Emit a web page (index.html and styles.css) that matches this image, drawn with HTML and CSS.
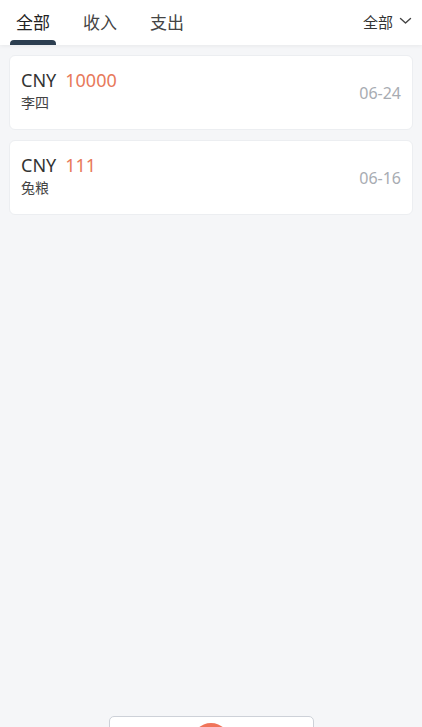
FILE: index.html
```html
<!DOCTYPE html>
<html lang="zh">
<head>
    <meta charset="UTF-8">
    <meta name="viewport" content="width=device-width, initial-scale=1.0">
    <title>账单</title>
    <link rel="stylesheet" href="styles.css">
</head>
<body>
    <div class="header">
        <div class="tabs">
            <div class="tab active">全部</div>
            <div class="tab">收入</div>
            <div class="tab">支出</div>
        </div>
        <div class="filter">
            全部
            <svg width="13" height="8" viewBox="0 0 13 8"><path d="M1.5 1.5 L6.5 6 L11.5 1.5" fill="none" stroke="#444" stroke-width="1.4" stroke-linecap="round" stroke-linejoin="round"/></svg>
        </div>
    </div>

    <div class="list">
        <div class="card">
            <div class="info">
                <div class="amount">CNY<span class="num">10000</span></div>
                <div class="name">李四</div>
            </div>
            <div class="date">06-24</div>
        </div>
        <div class="card">
            <div class="info">
                <div class="amount">CNY<span class="num">111</span></div>
                <div class="name">兔粮</div>
            </div>
            <div class="date">06-16</div>
        </div>
    </div>

    <div class="bottom">
        <div class="bar">
            <div class="add"></div>
        </div>
    </div>
</body>
</html>
```

FILE: styles.css
```css
body {
    font-family: "Noto Sans", "Noto Sans CJK SC", sans-serif;
    background-color: #f5f6f8;
    color: #333;
    margin: 0;
    height: 727px;
    overflow: hidden;
    display: flex;
    flex-direction: column;
}
.header {
    height: 45px;
    background-color: white;
    display: flex;
    justify-content: space-between;
    align-items: stretch;
    padding: 0 10px;
    box-shadow: 0 1px 4px rgba(0, 0, 0, 0.06);
}
.tabs {
    display: flex;
    gap: 21px;
}
.tab {
    width: 46px;
    display: flex;
    align-items: center;
    justify-content: center;
    font-size: 17px;
    color: #444;
    padding-bottom: 3px;
    box-sizing: border-box;
    position: relative;
}
.tab.active {
    color: #222;
}
.tab.active::after {
    content: "";
    position: absolute;
    left: 0;
    right: 0;
    bottom: 0;
    height: 5px;
    background-color: #2c3e50;
    border-radius: 4px 4px 0 0;
}
.filter {
    display: flex;
    align-items: center;
    gap: 6px;
    font-size: 15px;
    color: #333;
    padding-bottom: 3px;
}
.list {
    flex: 1;
    padding: 10px 9px;
    display: flex;
    flex-direction: column;
    gap: 10px;
}
.card {
    background-color: white;
    border-radius: 6px;
    border: 1px solid #eceef1;
    height: 75px;
    box-sizing: border-box;
    padding: 0 11px 4px;
    display: flex;
    justify-content: space-between;
    align-items: center;
}
.amount {
    font-size: 18px;
    color: #333;
    line-height: 22px;
}
.num {
    color: #e8795a;
    margin-left: 9px;
}
.name {
    font-size: 14px;
    color: #444;
    margin-top: 3px;
    line-height: 18px;
}
.date {
    font-size: 16px;
    color: #a8acb2;
    margin-top: 4px;
}
.bottom {
    height: 11px;
    display: flex;
    justify-content: center;
}
.bar {
    width: 205px;
    height: 20px;
    background-color: white;
    border: 1px solid #cdd1d8;
    border-radius: 5px;
    display: flex;
    justify-content: center;
    padding-top: 6px;
    box-sizing: border-box;
}
.add {
    width: 38px;
    height: 38px;
    border-radius: 50%;
    background-color: #f0745a;
}
```
